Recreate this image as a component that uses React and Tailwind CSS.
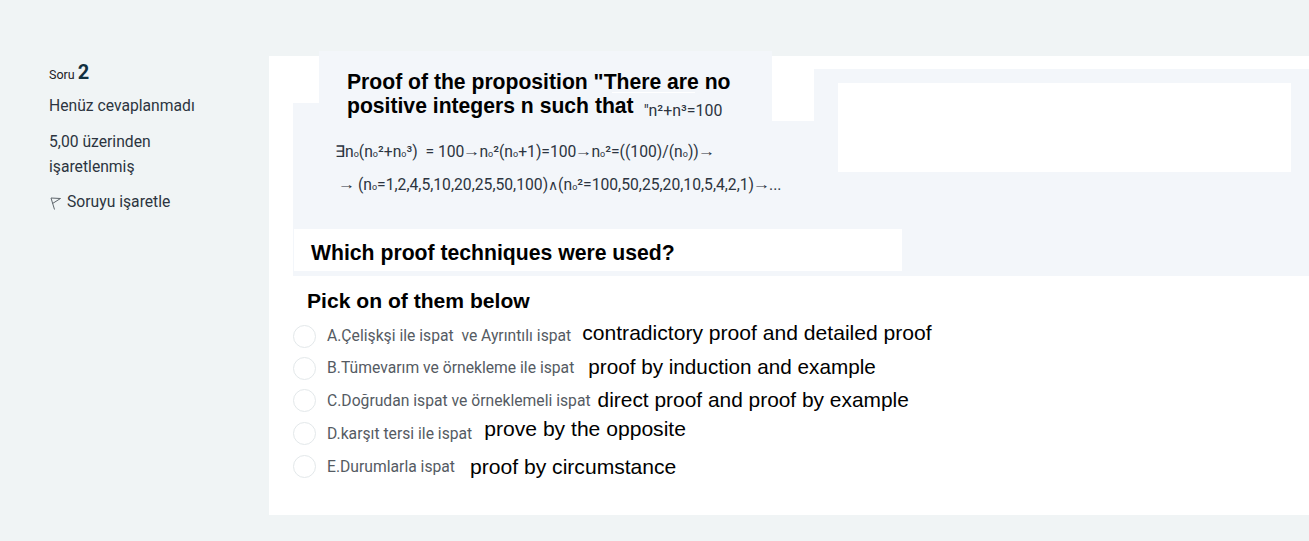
const options = [
  { label: 'A.Çelişkşi ile ispat  ve Ayrıntılı ispat', text: 'contradictory proof and detailed proof', gap: 'ml-[11px]', rowH: 'h-[32px]', shift: '-translate-y-[3px]', size: 'text-[21.1px]' },
  { label: 'B.Tümevarım ve örnekleme ile ispat', text: 'proof by induction and example', gap: 'ml-[14px]', rowH: 'h-[32px]', shift: '-translate-y-[1px]', size: 'text-[20.7px]' },
  { label: 'C.Doğrudan ispat ve örneklemeli ispat', text: 'direct proof and proof by example', gap: 'ml-[7px]', rowH: 'h-[33px]', shift: '-translate-y-[1px]', size: 'text-[20.9px]' },
  { label: 'D.karşıt tersi ile ispat', text: 'prove by the opposite', gap: 'ml-[12px]', rowH: 'h-[33px]', shift: '-translate-y-[5px]', size: 'text-[21.1px]' },
  { label: 'E.Durumlarla ispat', text: 'proof by circumstance', gap: 'ml-[15px]', rowH: 'h-[33px]', shift: '', size: 'text-[21.1px]' },
];

function FlagIcon() {
  return (
    <svg width="12" height="15" viewBox="0 0 12 15" fill="none" stroke="#5f666c" strokeWidth="1" className="mt-[5px] ml-[1px] shrink-0">
      <path d="M4.5 14.5 L1 3 L10.5 3.5 L2.5 8.5" />
    </svg>
  );
}

// small baseline "o" used as the index of n
function N() {
  return (
    <span>
      n<span className="text-[9px] leading-none">o</span>
    </span>
  );
}

function Arrow() {
  return (
    <span className="inline-block w-[15px] -translate-y-[1px] scale-x-[1.25] text-center font-['Liberation_Serif',serif] text-[14px] leading-none">→</span>
  );
}

function Sym({ children }) {
  return <span className="font-['Liberation_Sans',sans-serif] leading-none">{children}</span>;
}

export default function App() {
  return (
    <div className="flex min-h-[541px] bg-[#f0f4f5] font-['Roboto',sans-serif] text-[#2c3440]">
      <div className="w-[269px] shrink-0 pl-[49px] pt-[60px] text-[15.7px]">
        <div className="flex items-baseline gap-[3px] text-[#1d2125]">
          <span className="text-[12.5px]">Soru</span>
          <span className="text-[20px] font-bold leading-[24px] text-[#12303f]">2</span>
        </div>
        <p className="mt-[9px] leading-[24px]">Henüz cevaplanmadı</p>
        <p className="mt-[11px] w-[130px] leading-[25px]">5,00 üzerinden işaretlenmiş</p>
        <div className="mt-[11px] flex items-start gap-[5px] leading-[24px]">
          <FlagIcon />
          <span>Soruyu işaretle</span>
        </div>
      </div>

      <div className="mt-[56px] mb-[26px] flex-1 bg-white pt-[13px] pl-[24px]">
        <div className="bg-[#f3f6fa] pb-[5px]">
          <div className="flex items-start">
            <div className="h-[34px] w-[26px] bg-white"></div>
            <div className="relative -mt-[18px] w-[453px] bg-[#f3f6fa] pt-[19px] pl-[28px] font-['Liberation_Sans',sans-serif] text-[21.15px] font-bold leading-[24px] text-black">
              <div>Proof of the proposition "There are no</div>
              <div>
                positive integers n such that
                <span className="ml-[10px] align-[-3px] font-['Roboto',sans-serif] text-[15.9px] leading-none font-normal text-[#2c3440]">"n²+n³=100</span>
              </div>
              <div className="absolute top-[41px] left-[293px] h-px w-[83px] bg-white"></div>
            </div>
            <div className="h-[52px] w-[42px] bg-white"></div>
            <div className="ml-[24px] mt-[14px] h-[89px] w-[453px] bg-white"></div>
          </div>
          <div className="-mt-[37px] h-[66px] pl-[42px] text-[15.7px] leading-[33px] whitespace-pre">
            <div>
              <Sym>∃</Sym><N />(<N />²+<N />³)  = 100<Arrow /><N />²(<N />+1)=100<Arrow /><N />²=((100)/(<N />))<Arrow />
            </div>
            <div className="pl-[4px]">
              <Arrow /> (<N />=1,2,4,5,10,20,25,50,100)<span className="font-['DejaVu_Sans',sans-serif] text-[14px] leading-none font-extralight">∧</span>(<N />²=100,50,25,20,10,5,4,2,1)<Arrow />...
            </div>
          </div>
          <div className="mt-[28px] ml-[1px] h-[42px] w-[608px] bg-white pl-[17px] font-['Liberation_Sans',sans-serif] text-[21.2px] font-bold leading-[48px] text-black">
            Which proof techniques were used?
          </div>
        </div>

        <div className="mt-[12px] pl-[14px] font-['Liberation_Sans',sans-serif] text-[21.1px] font-bold leading-[26px] text-black">
          Pick on of them below
        </div>
        <div className="mt-[6px]">
          {options.map((o) => (
            <div key={o.label} className={`flex items-center ${o.rowH}`}>
              <span className="h-[23px] w-[23px] shrink-0 rounded-full border border-[#e3e8ea] bg-white"></span>
              <span className="ml-[11px] whitespace-pre text-[15.7px] text-[#555b63]">{o.label}</span>
              <span className={`whitespace-pre font-['Liberation_Sans',sans-serif] text-black ${o.size} ${o.gap} ${o.shift}`}>{o.text}</span>
            </div>
          ))}
        </div>
      </div>
    </div>
  );
}
